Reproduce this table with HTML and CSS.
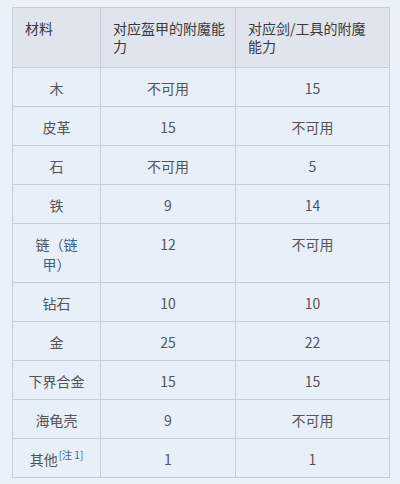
FILE: index.html
```html
<!DOCTYPE html>
<html lang="zh">
<head>
<meta charset="utf-8">
<link rel="stylesheet" href="styles.css">
</head>
<body>
<table class="ench">
  <colgroup>
    <col class="c1"><col class="c2"><col class="c3">
  </colgroup>
  <thead>
    <tr>
      <th>材料</th>
      <th>对应盔甲的附魔能<br>力</th>
      <th>对应剑/工具的附魔<br>能力</th>
    </tr>
  </thead>
  <tbody>
    <tr><td>木</td><td>不可用</td><td>15</td></tr>
    <tr><td>皮革</td><td>15</td><td>不可用</td></tr>
    <tr><td>石</td><td>不可用</td><td>5</td></tr>
    <tr><td>铁</td><td>9</td><td>14</td></tr>
    <tr class="tall"><td>链（<span class="link">链甲</span>）</td><td>12</td><td>不可用</td></tr>
    <tr><td>钻石</td><td>10</td><td>10</td></tr>
    <tr><td>金</td><td>25</td><td>22</td></tr>
    <tr><td>下界合金</td><td>15</td><td>15</td></tr>
    <tr><td>海龟壳</td><td>9</td><td>不可用</td></tr>
    <tr><td>其他<sup class="note">[注 1]</sup></td><td>1</td><td>1</td></tr>
  </tbody>
</table>
</body>
</html>
```
FILE: styles.css
```css
html, body {
  margin: 0;
  padding: 0;
  background: #eaf1f9;
}
body {
  padding: 7px 0 0 12px;
  font-family: "Noto Sans CJK SC", "Noto Sans", sans-serif;
  font-size: 14px;
  color: #555;
}
.ench {
  border-collapse: collapse;
  table-layout: fixed;
  width: 377px;
  background: #e7eff9;
}
.c1 { width: 88px; }
.c2 { width: 135px; }
.c3 { width: 154px; }
.ench th, .ench td {
  border: 1px solid #c6cdd8;
}
.ench th {
  background: #dfe4ed;
  color: #3a3a3a;
  font-weight: normal;
  text-align: left;
  vertical-align: top;
  line-height: 18px;
  padding: 11px 4px 12px 12px;
  white-space: nowrap;
}
.ench td {
  text-align: center;
  vertical-align: top;
  line-height: 20px;
  padding: 10px 11px 8px 11px;
}
.link {
  color: #3c5f94;
}
.note {
  color: #3c5f94;
  font-size: 10px;
  line-height: 0;
  vertical-align: 6px;
  margin-left: 1px;
}
```
